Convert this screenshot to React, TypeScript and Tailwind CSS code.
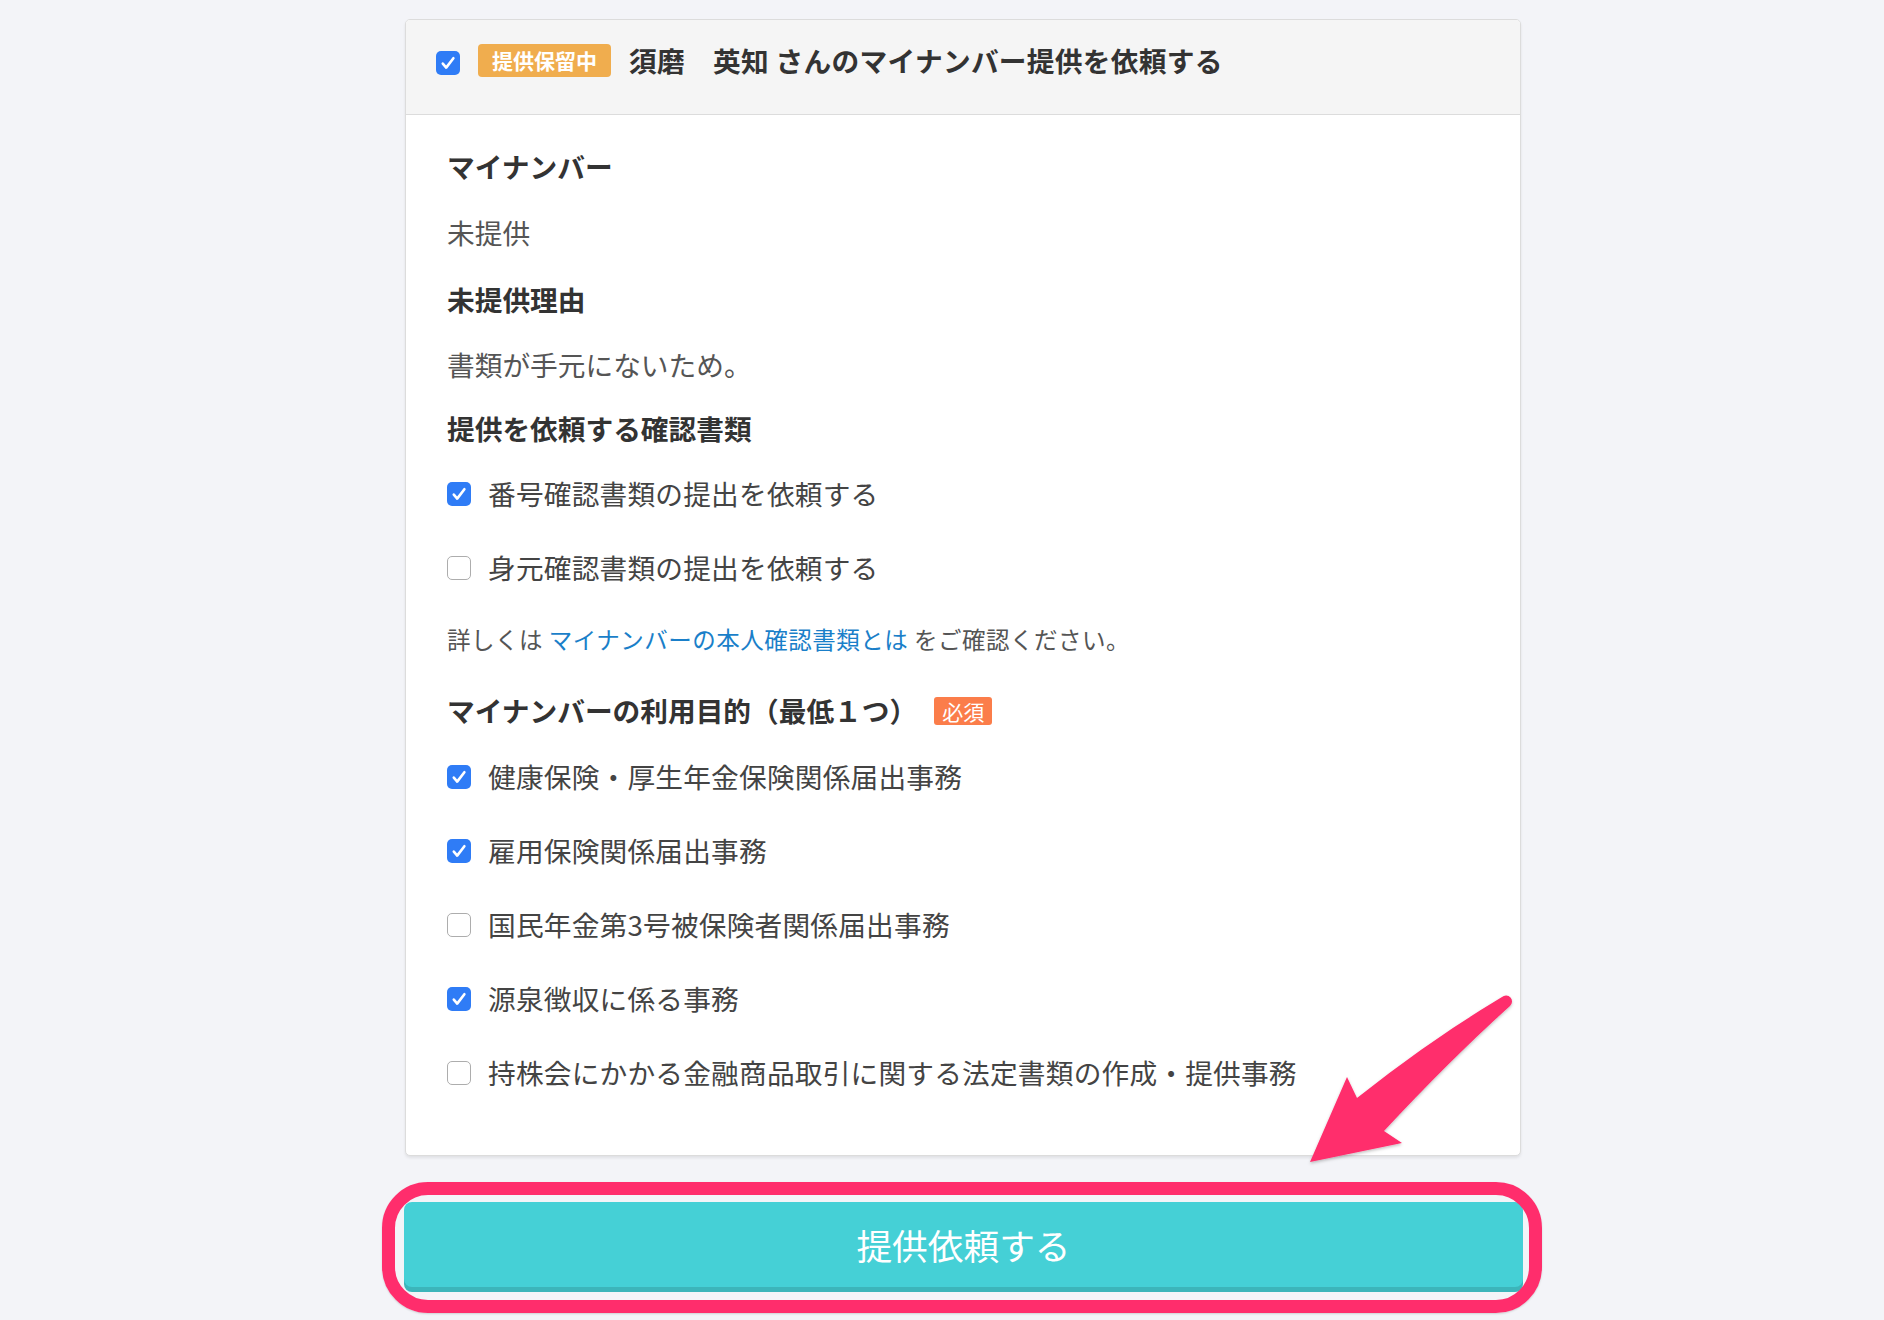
import React from 'react';

const Box = ({ checked }: { checked: boolean }) =>
    checked ? (
        <span className="w-[24px] h-[24px] shrink-0 rounded-[5px] bg-[#2f7cf6] flex items-center justify-center">
            <svg width="24" height="24" viewBox="0 0 24 24">
                <path d="M6.8 12.6 L10.2 16.6 L17.4 7.2" stroke="white" strokeWidth="2.6" fill="none" strokeLinecap="round" strokeLinejoin="round" />
            </svg>
        </span>
    ) : (
        <span className="w-[24px] h-[24px] shrink-0 rounded-[5px] border border-[#adadad] bg-white" />
    );

const CheckRow = ({ checked, label, h }: { checked: boolean; label: string; h: string }) => (
    <div className={`flex items-center ${h}`}>
        <Box checked={checked} />
        <span className="ml-[17px] text-[27.7px] tracking-[0.2px] text-[#444]">{label}</span>
    </div>
);

const purposes = [
    { label: '健康保険・厚生年金保険関係届出事務', checked: true },
    { label: '雇用保険関係届出事務', checked: true },
    { label: '国民年金第3号被保険者関係届出事務', checked: false },
    { label: '源泉徴収に係る事務', checked: true },
    { label: '持株会にかかる金融商品取引に関する法定書類の作成・提供事務', checked: false },
];

export default function App() {
    return (
        <div className="relative min-h-[1320px] bg-[#f3f4f8] font-['Noto_Sans_CJK_JP',sans-serif] overflow-hidden">
            <div className="pt-[19px] pl-[405px]">
                <div className="w-[1116px] bg-white border border-[#dcdcdc] rounded-[5px] shadow-[0_2px_3px_rgba(0,0,0,0.08)] overflow-hidden">
                    {/* header */}
                    <div className="h-[95px] bg-[#f5f5f5] border-b border-[#dcdcdc] pl-[30px] pt-[24px]">
                        <div className="flex items-center h-[33px]">
                            <span className="mt-[5px]">
                                <Box checked={true} />
                            </span>
                            <span className="ml-[18px] h-[33px] px-[14px] rounded-[4px] bg-[#f0ad4e] text-white font-bold text-[21px] leading-[33px]">
                                提供保留中
                            </span>
                            <span className="ml-[18px] text-[27.7px] tracking-[0.3px] font-bold text-[#333]">須磨　英知 さんのマイナンバー提供を依頼する</span>
                        </div>
                    </div>

                    {/* body */}
                    <div className="pl-[41px] pt-[19px] pb-[45px]">
                        <div className="h-[66px] flex items-center text-[27.7px] font-bold text-[#333]">マイナンバー</div>
                        <div className="h-[66px] flex items-center text-[27.7px] text-[#555]">未提供</div>
                        <div className="h-[68px] flex items-center text-[27.7px] font-bold text-[#333]">未提供理由</div>
                        <div className="h-[62px] flex items-center text-[27.7px] text-[#555]">書類が手元にないため。</div>
                        <div className="h-[66px] flex items-center text-[27.7px] font-bold text-[#333]">提供を依頼する確認書類</div>
                        <CheckRow h="h-[64px]" checked={true} label="番号確認書類の提出を依頼する" />
                        <CheckRow h="h-[84px]" checked={false} label="身元確認書類の提出を依頼する" />
                        <div className="h-[60px] flex items-center text-[23.5px] tracking-[0.5px] text-[#555]">
                            詳しくは&nbsp;<span className="text-[#1a7fc9]">マイナンバーの本人確認書類とは</span>&nbsp;をご確認ください。
                        </div>
                        <div className="h-[70px] pt-[12px] flex items-center">
                            <span className="text-[27.7px] font-bold text-[#333]">マイナンバーの利用目的（最低１つ）</span>
                            <span className="ml-[17px] h-[28px] px-[8px] rounded-[3px] bg-[#fb7d4a] text-white text-[21px] leading-[28px]">必須</span>
                        </div>
                        {purposes.map((p) => (
                            <CheckRow key={p.label} h="h-[74px]" checked={p.checked} label={p.label} />
                        ))}
                    </div>
                </div>

                {/* submit button */}
                <div className="relative mt-[46px] -ml-[1px] w-[1119px]">
                    <button className="w-full h-[90px] rounded-[8px] bg-[#45d0d6] shadow-[inset_0_-5px_0_rgba(0,0,0,0.13)] text-white text-[35.7px] pb-[4px]">
                        提供依頼する
                    </button>
                    <div className="absolute -left-[22px] -right-[19px] -top-[20px] -bottom-[21px] border-[13px] border-[#ff2d6c] rounded-[46px] shadow-[0_1px_2px_rgba(0,0,0,0.15)] pointer-events-none" />
                </div>
            </div>

            {/* annotation arrow */}
            <svg className="absolute left-0 top-0 pointer-events-none" width="1884" height="1320" viewBox="0 0 1884 1320">
                <defs>
                    <filter id="sh" x="-20%" y="-20%" width="140%" height="140%">
                        <feDropShadow dx="0" dy="1.5" stdDeviation="1.5" floodColor="#000" floodOpacity="0.25" />
                    </filter>
                </defs>
                <path
                    d="M1502 997 Q1430 1040 1357 1098 L1347 1077 L1310 1162 L1402 1143 L1384 1131 Q1450 1060 1510 1006 A5 5 0 0 0 1502 997 Z"
                    fill="#ff2d6c"
                    filter="url(#sh)"
                />
            </svg>
        </div>
    );
}
